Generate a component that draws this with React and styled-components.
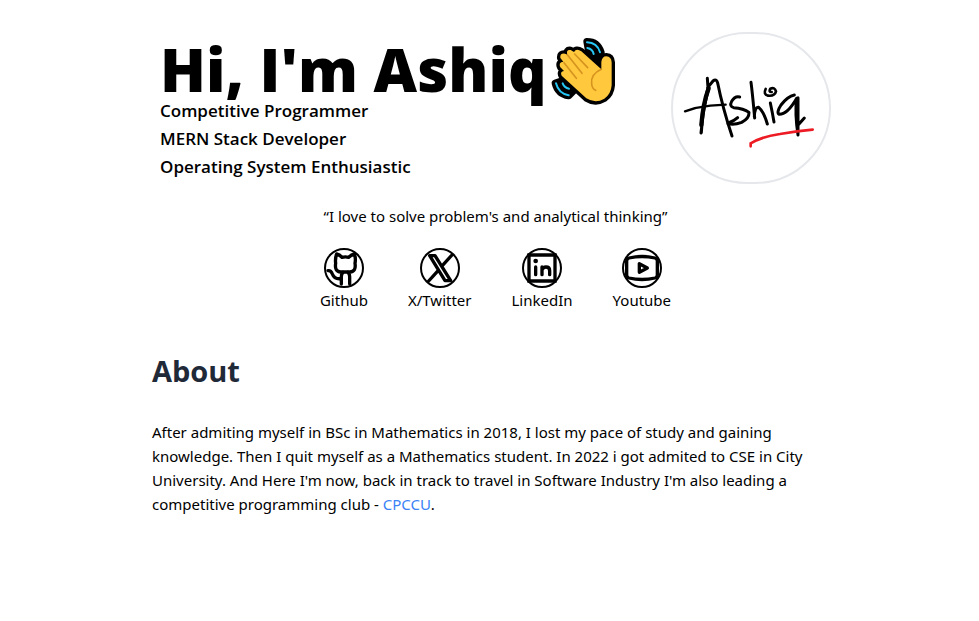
import React from "react";
import styled, { createGlobalStyle } from "styled-components";

const GlobalStyle = createGlobalStyle`
  * { box-sizing: border-box; margin: 0; padding: 0; }
  body {
    background: #fff;
    color: #000;
    font: 15px/24px "Noto Sans", "Open Sans", sans-serif;
  }
`;

const Page = styled.main`
  max-width: 683px;
  margin: 0 auto;
  padding: 32px 0 32px 4px;
`;

const Header = styled.header`
  display: flex;
  justify-content: space-between;
  align-items: flex-start;
`;

const Intro = styled.div`
  padding: 5px 0 0 8px;
  font-family: "Open Sans", sans-serif;
`;

const Title = styled.h1`
  display: flex;
  align-items: flex-start;
  gap: 4px;
  height: 60px;
  font-size: 60px;
  font-weight: 800;
  line-height: 64px;
  white-space: nowrap;
`;

const Wave = styled.svg`
  width: 68px;
  height: 70px;
  flex: none;
`;

const Roles = styled.ul`
  list-style: none;
  font-size: 17px;
  font-weight: 600;
  line-height: 28px;
`;

const Avatar = styled.svg`
  width: 160px;
  height: 152px;
  flex: none;
  border: 2px solid #e5e7eb;
  border-radius: 76px;
`;

const Quote = styled.p`
  margin-top: 20px;
  padding-left: 8px;
  text-align: center;
`;

const Socials = styled.nav`
  display: flex;
  justify-content: center;
  gap: 40px;
  margin-top: 20px;
  padding-left: 8px;
`;

const SocialLink = styled.a`
  display: flex;
  flex-direction: column;
  align-items: center;
  color: inherit;
  text-decoration: none;
`;

const SocialIcon = styled.svg`
  width: 40px;
  height: 40px;
  fill: none;
  stroke: #000;
  stroke-width: 10;
  stroke-linecap: round;
  stroke-linejoin: round;
`;

const Heading = styled.h2`
  margin-top: 40px;
  color: #1f2937;
  font-family: "Open Sans", sans-serif;
  font-size: 29px;
  font-weight: 700;
  line-height: 38px;
`;

const About = styled.p`
  margin-top: 30px;
`;

const ClubLink = styled.a`
  color: #3b82f6;
  text-decoration: none;
`;

const socials = [
  {
    name: "Github",
    art: (
      <>
        <path d="M35 46 Q33 30 38 18 Q47 20 54 28 Q64 25 74 28 Q82 20 91 18 Q96 30 93 46 Q97 71 78 72 H50 Q31 71 35 46Z" />
        <path d="M12 68 Q21 67 25 78 Q31 94 50 92 M52 108 V86 Q52 78 57 73 M77 108 V86 Q77 78 72 73" />
      </>
    ),
  },
  {
    name: "X/Twitter",
    art: <path d="M29 23 H45 L92 98 H75Z M96 21 L67 53 M26 99 L55 67" />,
  },
  {
    name: "LinkedIn",
    art: (
      <>
        <path d="M21 21 H99 V99 H21Z" strokeLinejoin="miter" />
        <path d="M41 57 V80 M60 57 V80 M60 66 Q63 57 72 57 Q83 57 83 68 V80" />
        <circle cx="41" cy="39" r="7" fill="#000" stroke="none" />
      </>
    ),
  },
  {
    name: "Youtube",
    art: (
      <>
        <path d="M21 30 Q60 21 99 30 Q106 32 106 40 V80 Q106 88 99 90 Q60 99 21 90 Q14 88 14 80 V40 Q14 32 21 30Z" />
        <path d="M52 47 V73 L76 60Z" />
      </>
    ),
  },
];

function WavingHand() {
  const palm =
    "M190 130 V108 Q192 91 205 91 Q220 92 221 109 V178 Q219 205 199 218 Q172 234 145 217 L71 149 Q65 137 78 135 L67 124 Q60 109 76 107 L67 96 Q65 81 81 83 L88 86 Q83 70 98 72 L108 78 Q115 66 130 76Z";
  return (
    <Wave viewBox="36 33 204 210" role="img" aria-label="waving hand">
      <g fill="none" stroke="#000" strokeLinecap="round" strokeLinejoin="round">
        <path
          d="M147 47 Q179 47 189 79 L187 110 L151 69Z M52 172 Q60 204 92 209 L106 195 L72 165Z"
          fill="#000"
          strokeWidth="22"
        />
        <path d={palm} fill="#000" strokeWidth="20" />
      </g>
      <path d={palm} fill="#ffc83d" />
      <path
        d="M147 49 Q178 50 186 79 M148 66 Q164 69 167 84 M54 172 Q62 203 92 208 M74 172 Q79 185 93 188"
        fill="none"
        stroke="#26c6f5"
        strokeWidth="6"
        strokeLinecap="round"
      />
      <path
        d="M110 84 L149 125 M88 86 L132 142 M78 110 L115 157 M190 130 Q157 145 161 174 Q162 188 173 193"
        fill="none"
        stroke="#d6941f"
        strokeWidth="5"
        strokeLinecap="round"
      />
    </Wave>
  );
}

function Signature() {
  return (
    <Avatar viewBox="39 27 468 444" role="img" aria-label="Ashiq">
      <g fill="none" stroke="#000" strokeWidth="9" strokeLinecap="round" strokeLinejoin="round">
        <path d="M75 259 Q111 246 151 242 L197 239" strokeWidth="7" />
        <path d="M142 160 L144 188 Q131 240 123 324 M146 190 Q127 259 124 323 M143 188 L159 168 Q169 160 173 174 Q188 249 216 333" />
        <path d="M146 190 Q129 236 124 300" strokeWidth="13" />
        <path d="M239 216 Q225 212 215 229 Q207 244 221 248 Q251 250 267 262 Q268 280 245 292 Q222 301 204 296 M208 292 Q222 288 233 278" />
        <path d="M273 172 Q277 201 284 279 M283 275 Q284 245 296 247 Q312 261 322 297" />
        <path d="M317 192 Q309 208 324 212 Q345 214 348 199 Q344 185 331 191 Q325 201 335 201" strokeWidth="8" />
        <path d="M331 234 Q337 262 342 291" />
        <path d="M403 210 Q383 214 363 240 Q348 263 358 268 Q383 268 410 220 Q404 263 414 330 M414 218 V328 M415 299 L433 279" />
      </g>
      <path d="M272 364 V355 Q308 334 360 327 Q413 318 458 314" fill="none" stroke="#ed1c24" strokeWidth="8" strokeLinecap="round" />
    </Avatar>
  );
}

export default function App() {
  return (
    <>
      <GlobalStyle />
      <Page>
        <Header>
          <Intro>
            <Title>
              Hi, I'm Ashiq
              <WavingHand />
            </Title>
            <Roles>
              <li>Competitive Programmer</li>
              <li>MERN Stack Developer</li>
              <li>Operating System Enthusiastic</li>
            </Roles>
          </Intro>
          <Signature />
        </Header>
        <Quote>“I love to solve problem's and analytical thinking”</Quote>
        <Socials aria-label="Social profiles">
          {socials.map(({ name, art }) => (
            <SocialLink key={name} href="#">
              <SocialIcon viewBox="0 0 120 120" aria-hidden="true">
                <circle cx="60" cy="60" r="57" strokeWidth="6" />
                {art}
              </SocialIcon>
              {name}
            </SocialLink>
          ))}
        </Socials>
        <Heading>About</Heading>
        <About>
          After admiting myself in BSc in Mathematics in 2018, I lost my pace of study and gaining
          knowledge. Then I quit myself as a Mathematics student. In 2022 i got admited to CSE in City
          University. And Here I'm now, back in track to travel in Software Industry I'm also leading a
          competitive programming club - <ClubLink href="#">CPCCU</ClubLink>.
        </About>
      </Page>
    </>
  );
}
